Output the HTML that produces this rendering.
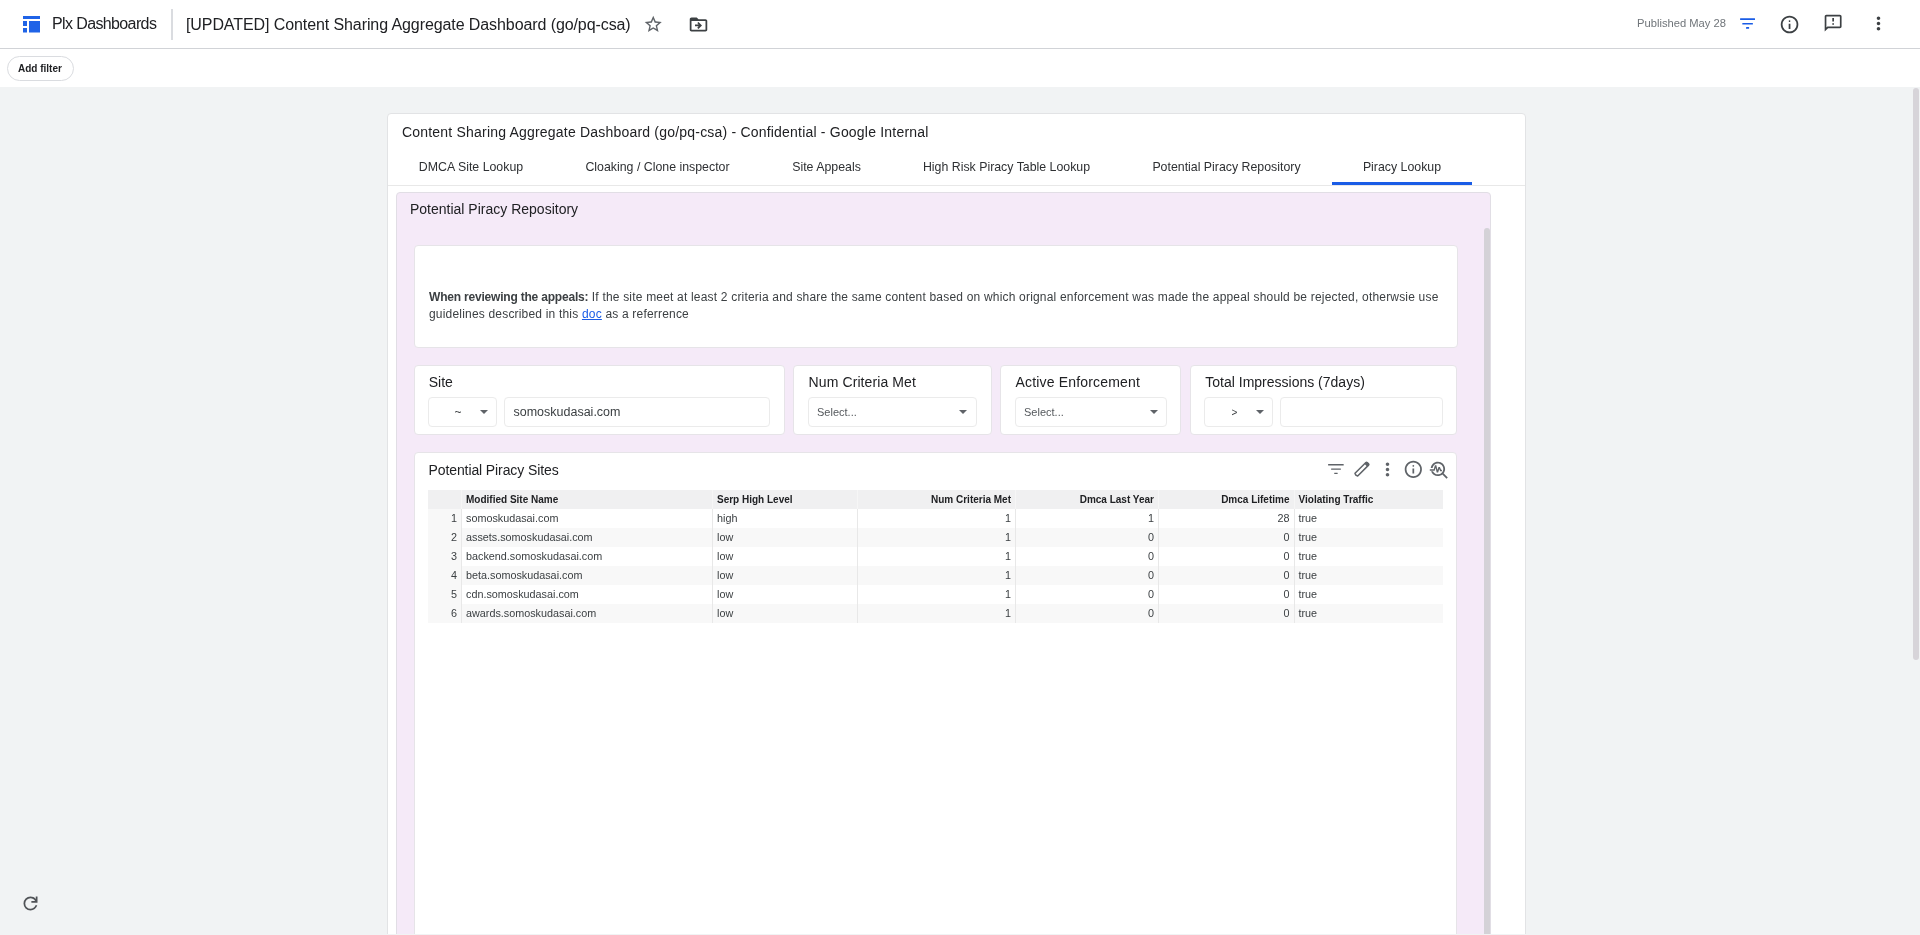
<!DOCTYPE html>
<html><head><meta charset="utf-8">
<style>
*{box-sizing:border-box;margin:0;padding:0}
html,body{will-change:transform;width:1920px;height:935px;overflow:hidden;background:#f1f3f4;font-family:"Liberation Sans",sans-serif;color:#202124}
.a{position:absolute}
.t{position:absolute;white-space:nowrap;line-height:1}
#hdr{left:0;top:0;width:1920px;height:49px;background:#fff;border-bottom:1px solid #d1d3d7}
#fbar{left:0;top:49px;width:1920px;height:38px;background:#fff}
.chip{left:7px;top:56px;width:67px;height:25px;border:1px solid #dadce0;border-radius:13px;background:#fff}
#card{left:387px;top:113px;width:1139px;height:900px;background:#fff;border:1px solid #e2e3e5;border-radius:4px}
#tabline{left:388px;top:185px;width:1137px;height:1px;background:#e8e8e8}
#tabul{left:1332px;top:182px;width:140px;height:3px;background:#1a5ce6}
#panel{left:396px;top:192px;width:1095px;height:800px;background:#f5eaf8;border:1px solid #e1dee5;border-radius:4px}
.wcard{position:absolute;background:#fff;border:1px solid #e6e4e8;border-radius:4px}
.inp{position:absolute;background:#fff;border:1px solid #ebebeb;border-radius:4px}
.arr{position:absolute;width:0;height:0;border-left:4.3px solid transparent;border-right:4.3px solid transparent;border-top:4.6px solid #5f6368}
.tab{position:absolute;top:161px;font-size:12.35px;color:#2e3033;line-height:1;white-space:nowrap;text-align:center}
.lbl{font-size:14px;color:#202124}
.sel{font-size:11px;color:#55595d}
table{position:absolute;left:428px;top:490px;border-collapse:collapse;font-size:10.8px;color:#3c4043}
td,th{height:19px;padding:0 4px;white-space:nowrap;line-height:19px}
th{font-weight:700;font-size:10px;background:#f0f0f1;color:#202124}
.r{text-align:right}
.l{text-align:left}
tbody tr:nth-child(even) td{background:#f8f8f8}
tbody tr:nth-child(odd) td{background:#fff}
tbody tr td:first-child{background:#f8f8f8}
td+td,th+th{border-left:1px solid #e8e8e8}
th+th{border-left-color:#f6f6f6}
</style></head>
<body>
<!-- header -->
<div id="hdr" class="a"></div>
<svg class="a" style="left:23px;top:16px" width="17" height="17" viewBox="0 0 17 17"><rect x="0" y="0" width="17" height="3" fill="#1f63e7"/><rect x="0" y="5" width="4" height="5" fill="#1f63e7"/><rect x="0" y="12" width="4" height="4.5" fill="#1f63e7"/><rect x="6" y="5" width="11" height="11.5" fill="#1f63e7"/></svg>
<div class="t" style="left:52px;top:15.5px;font-size:16px;letter-spacing:-0.62px;color:#202124">Plx Dashboards</div>
<div class="a" style="left:171px;top:9px;width:1.5px;height:31px;background:#dadce0"></div>
<div class="t" style="left:186px;top:17px;font-size:16px;letter-spacing:-0.09px;color:#202124">[UPDATED] Content Sharing Aggregate Dashboard (go/pq-csa)</div>
<svg class="a" style="left:642.7px;top:13.5px" width="20.5" height="20.5" viewBox="0 0 24 24"><path fill="#5f6368" d="M22 9.24l-7.19-.62L12 2 9.19 8.63 2 9.24l5.46 4.73L5.82 21 12 17.27 18.18 21l-1.63-7.03L22 9.24zM12 15.4l-3.76 2.27 1-4.28-3.32-2.88 4.38-.38L12 6.1l1.71 4.04 4.38.38-3.32 2.88 1 4.28L12 15.4z"/></svg>
<svg class="a" style="left:688px;top:13.5px" width="21" height="21" viewBox="0 0 24 24"><path fill="#3c4043" d="M20 6h-8l-2-2H4c-1.1 0-2 .9-2 2v12c0 1.1.9 2 2 2h16c1.1 0 2-.9 2-2V8c0-1.1-.9-2-2-2zm0 12H4V8h16v10zm-8.01-9l-1.41 1.41L12.16 12H8v2h4.16l-1.59 1.59L11.99 17 16 13.01 11.99 9z"/></svg>
<div class="t" style="left:1637px;top:18px;font-size:11.2px;color:#70757a">Published May 28</div>
<svg class="a" style="left:1738px;top:16px" width="20" height="15" viewBox="0 0 20 15"><g fill="#1a5ce6"><rect x="2.1" y="2.3" width="14.9" height="1.7" rx="0.3"/><rect x="4.3" y="6.9" width="10.6" height="1.6" rx="0.3"/><rect x="8" y="11.1" width="3.1" height="1.7" rx="0.3"/></g></svg>
<svg class="a" style="left:1778.9px;top:13.7px" width="21.1" height="21.1" viewBox="0 -960 960 960"><path fill="#3c4043" d="M440-280h80v-240h-80v240Zm40-320q17 0 28.5-11.5T520-640q0-17-11.5-28.5T480-680q-17 0-28.5 11.5T440-640q0 17 11.5 28.5T480-600Zm0 520q-83 0-156-31.5T197-197q-54-54-85.5-127T80-480q0-83 31.5-156T197-763q54-54 127-85.5T480-880q83 0 156 31.5T763-763q54 54 85.5 127T880-480q0 83-31.5 156T763-197q-54 54-127 85.5T480-80Zm0-80q134 0 227-93t93-227q0-134-93-227t-227-93q-134 0-227 93t-93 227q0 134 93 227t227 93Zm0-320Z"/></svg>
<svg class="a" style="left:1822.8px;top:12.9px" width="20.28" height="20.28" viewBox="0 0 24 24"><path fill="#3c4043" d="M20 2H4c-1.1 0-1.99.9-1.99 2L2 22l4-4h14c1.1 0 2-.9 2-2V4c0-1.1-.9-2-2-2zm0 14H5.17l-.59.59-.58.58V4h16v12zm-9-4h2v2h-2zm0-6h2v4h-2z"/></svg>
<svg class="a" style="left:1868px;top:13px" width="21" height="21" viewBox="0 0 24 24"><path fill="#3c4043" d="M12 8c1.1 0 2-.9 2-2s-.9-2-2-2-2 .9-2 2 .9 2 2 2zm0 2c-1.1 0-2 .9-2 2s.9 2 2 2 2-.9 2-2-.9-2-2-2zm0 6c-1.1 0-2 .9-2 2s.9 2 2 2 2-.9 2-2-.9-2-2-2z"/></svg>

<!-- filter bar -->
<div id="fbar" class="a"></div>
<div class="a chip"></div>
<div class="t" style="left:18px;top:64px;font-size:10px;font-weight:700;color:#202124">Add filter</div>

<!-- refresh -->
<svg class="a" style="left:20px;top:892.7px" width="21" height="21" viewBox="0 -960 960 960"><path fill="#505357" d="M480-160q-134 0-227-93t-93-227q0-134 93-227t227-93q69 0 132 28.5T720-690v-110h80v280H520v-80h168q-32-56-87.5-88T480-720q-100 0-170 70t-70 170q0 100 70 170t170 70q77 0 139-44t87-116h84q-28 106-114 173t-196 67Z"/></svg>
<!-- page scrollbar -->
<div class="a" style="left:1912.5px;top:88px;width:6.5px;height:572px;background:#d7d4d9;border-radius:3.5px"></div>

<!-- card -->
<div id="card" class="a"></div>
<div class="t" style="left:402px;top:125px;font-size:14px;letter-spacing:0.2px;color:#202124">Content Sharing Aggregate Dashboard (go/pq-csa) - Confidential - Google Internal</div>
<div class="tab" style="left:388px;width:166px">DMCA Site Lookup</div>
<div class="tab" style="left:554px;width:207px">Cloaking / Clone inspector</div>
<div class="tab" style="left:761px;width:131px">Site Appeals</div>
<div class="tab" style="left:892px;width:229px">High Risk Piracy Table Lookup</div>
<div class="tab" style="left:1121px;width:211px">Potential Piracy Repository</div>
<div class="tab" style="left:1332px;width:140px">Piracy Lookup</div>
<div id="tabline" class="a"></div>
<div id="tabul" class="a"></div>

<!-- panel -->
<div id="panel" class="a"></div>
<div class="a" style="left:1483.8px;top:227.7px;width:6.6px;height:720px;background:#d4d2d7;border-radius:3.3px 3.3px 0 0"></div>
<div class="t lbl" style="left:410px;top:202px">Potential Piracy Repository</div>

<!-- text card -->
<div class="wcard" style="left:414px;top:244.6px;width:1043.5px;height:103.4px"></div>
<div class="t" style="left:429px;top:288.8px;font-size:12px;color:#3c4043;line-height:17px"><b style="letter-spacing:-0.2px;color:#3c4043">When reviewing the appeals:</b><span style="letter-spacing:0.19px"> If the site meet at least 2 criteria and share the same content based on which orignal enforcement was made the appeal should be rejected, otherwsie use</span><br><span style="letter-spacing:0.19px">guidelines described in this <u style="color:#1a5ce6">doc</u> as a referrence</span></div>

<!-- filter cards -->
<div class="wcard" style="left:414px;top:365px;width:371px;height:69.5px"></div>
<div class="wcard" style="left:793px;top:365px;width:199px;height:69.5px"></div>
<div class="wcard" style="left:1000px;top:365px;width:181px;height:69.5px"></div>
<div class="wcard" style="left:1190px;top:365px;width:267px;height:69.5px"></div>
<div class="t lbl" style="left:428.7px;top:375.3px">Site</div>
<div class="t lbl" style="left:808.6px;top:375.3px;letter-spacing:0.1px">Num Criteria Met</div>
<div class="t lbl" style="left:1015.5px;top:375.3px;letter-spacing:0.17px">Active Enforcement</div>
<div class="t lbl" style="left:1205.3px;top:375.3px">Total Impressions (7days)</div>

<div class="inp" style="left:428px;top:397px;width:69px;height:30px"></div>
<div class="t" style="left:454.5px;top:406px;font-size:12px;color:#3c4043">~</div>
<div class="arr" style="left:479.5px;top:410px"></div>
<div class="inp" style="left:504px;top:397px;width:266px;height:30px"></div>
<div class="t" style="left:513.5px;top:405.7px;font-size:12.5px;color:#3c4043">somoskudasai.com</div>

<div class="inp" style="left:808px;top:397px;width:169px;height:30px"></div>
<div class="t sel" style="left:817px;top:407px">Select...</div>
<div class="arr" style="left:959.4px;top:410px"></div>

<div class="inp" style="left:1015px;top:397px;width:152px;height:30px"></div>
<div class="t sel" style="left:1024px;top:407px">Select...</div>
<div class="arr" style="left:1149.5px;top:410px"></div>

<div class="inp" style="left:1204px;top:397px;width:69px;height:30px"></div>
<div class="t" style="left:1231.5px;top:407.5px;font-size:10px;color:#3c4043">&gt;</div>
<div class="arr" style="left:1255.5px;top:410px"></div>
<div class="inp" style="left:1280px;top:397px;width:163px;height:30px"></div>

<!-- table card -->
<div class="wcard" style="left:414px;top:452px;width:1043px;height:600px"></div>
<div class="t lbl" style="left:428.5px;top:462.5px;letter-spacing:-0.1px">Potential Piracy Sites</div>
<!-- table icons -->
<svg class="a" style="left:1326px;top:462px" width="20" height="14" viewBox="0 0 20 14"><g fill="#5f6368"><rect x="2.1" y="2" width="15.6" height="1.6" rx="0.3"/><rect x="5.1" y="6.4" width="9.8" height="1.4" rx="0.3"/><rect x="8.2" y="10.7" width="3.5" height="1.2" rx="0.3"/></g></svg>
<svg class="a" style="left:1350px;top:457px" width="24" height="24" viewBox="0 0 24 24"><g transform="rotate(-45 12 12)"><path d="M4 10.1H19.4a0.9 0.9 0 0 1 0.9 0.9V13a0.9 0.9 0 0 1 -0.9 0.9H4L3.3 12Z" fill="none" stroke="#5f6368" stroke-width="1.5" stroke-linejoin="round"/><rect x="17.4" y="10.1" width="2.9" height="3.8" rx="0.9" fill="#5f6368"/></g></svg>
<svg class="a" style="left:1377px;top:458.5px" width="21" height="21" viewBox="0 0 24 24"><path fill="#5f6368" d="M12 8c1.1 0 2-.9 2-2s-.9-2-2-2-2 .9-2 2 .9 2 2 2zm0 2c-1.1 0-2 .9-2 2s.9 2 2 2 2-.9 2-2-.9-2-2-2zm0 6c-1.1 0-2 .9-2 2s.9 2 2 2 2-.9 2-2-.9-2-2-2z"/></svg>
<svg class="a" style="left:1403.18px;top:459.18px" width="20.64" height="20.64" viewBox="0 -960 960 960"><path fill="#5f6368" d="M440-280h80v-240h-80v240Zm40-320q17 0 28.5-11.5T520-640q0-17-11.5-28.5T480-680q-17 0-28.5 11.5T440-640q0 17 11.5 28.5T480-600Zm0 520q-83 0-156-31.5T197-197q-54-54-85.5-127T80-480q0-83 31.5-156T197-763q54-54 127-85.5T480-880q83 0 156 31.5T763-763q54 54 85.5 127T880-480q0 83-31.5 156T763-197q-54 54-127 85.5T480-80Zm0-80q134 0 227-93t93-227q0-134-93-227t-227-93q-134 0-227 93t-93 227q0 134 93 227t227 93Zm0-320Z"/></svg>
<svg class="a" style="left:1428px;top:458.7px" width="21.6" height="21.6" viewBox="0 0 24 24"><path fill="#5f6368" d="M22 20.59l-4.69-4.69C18.37 14.55 19 12.85 19 11c0-4.42-3.58-8-8-8-4.08 0-7.44 3.05-7.93 7h2.02C5.57 7.17 8.03 5 11 5c3.31 0 6 2.69 6 6s-2.69 6-6 6c-2.42 0-4.5-1.44-5.45-3.5H3.4C4.45 16.69 7.46 19 11 19c1.85 0 3.55-.63 4.9-1.69L20.59 22 22 20.59zM8.43 9.69L9.65 15h1.64l1.26-3.78.95 2.28h2v-1.5h-1l-1.25-3H11.61l-1.12 3.35L9.29 7H7.66l-1.29 4.5H2v1.5h5.43z"/></svg>

<table>
<colgroup><col style="width:33.5px"><col style="width:251px"><col style="width:145px"><col style="width:158px"><col style="width:143px"><col style="width:135.5px"><col style="width:149px"></colgroup>
<thead><tr><th></th><th class="l">Modified Site Name</th><th class="l">Serp High Level</th><th class="r">Num Criteria Met</th><th class="r">Dmca Last Year</th><th class="r">Dmca Lifetime</th><th class="l">Violating Traffic</th></tr></thead>
<tbody>
<tr><td class="r">1</td><td>somoskudasai.com</td><td>high</td><td class="r">1</td><td class="r">1</td><td class="r">28</td><td>true</td></tr>
<tr><td class="r">2</td><td>assets.somoskudasai.com</td><td>low</td><td class="r">1</td><td class="r">0</td><td class="r">0</td><td>true</td></tr>
<tr><td class="r">3</td><td>backend.somoskudasai.com</td><td>low</td><td class="r">1</td><td class="r">0</td><td class="r">0</td><td>true</td></tr>
<tr><td class="r">4</td><td>beta.somoskudasai.com</td><td>low</td><td class="r">1</td><td class="r">0</td><td class="r">0</td><td>true</td></tr>
<tr><td class="r">5</td><td>cdn.somoskudasai.com</td><td>low</td><td class="r">1</td><td class="r">0</td><td class="r">0</td><td>true</td></tr>
<tr><td class="r">6</td><td>awards.somoskudasai.com</td><td>low</td><td class="r">1</td><td class="r">0</td><td class="r">0</td><td>true</td></tr>
</tbody>
</table>
<div class="a" style="left:0;top:934px;width:1920px;height:1px;background:#f1f3f4"></div>
</body></html>
